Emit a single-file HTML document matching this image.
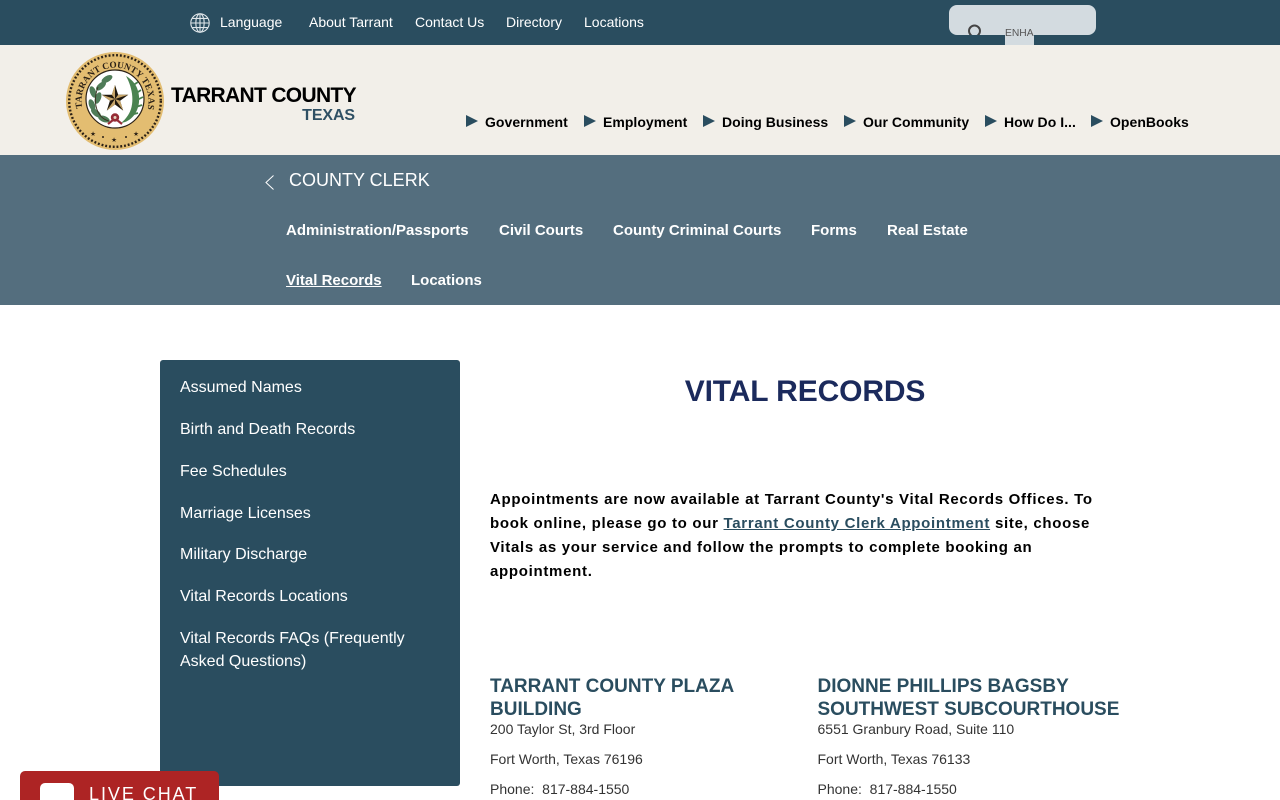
<!DOCTYPE html>
<html lang="en">
<head>
<meta charset="utf-8">
<title>Vital Records | Tarrant County</title>
<style>
html,body{margin:0;padding:0;background:#fff;width:1280px;height:800px;overflow:hidden}
body{position:relative;font-family:"Liberation Sans",Arial,sans-serif}
.a{position:absolute;white-space:nowrap;line-height:20px}
.bar{position:absolute;left:0;width:1280px}
.top{color:#fff;font-size:14px;top:12px}
.main{color:#000;font-size:14px;font-weight:bold;top:112px;letter-spacing:.03px}
.tri{position:absolute;top:115px;width:0;height:0;border-top:6px solid transparent;border-bottom:6px solid transparent;border-left:12px solid #2a4d5f}
.sub{color:#fff;font-size:15px;font-weight:bold}
.side{color:#fff;font-size:16px;left:180px;letter-spacing:0}
.body{color:#000;font-size:15px;font-weight:bold;left:490px;letter-spacing:.7px;line-height:24px}
.h3{color:#2a4d5f;font-size:19px;font-weight:bold;line-height:23px}
.p{color:#333;font-size:14px}
</style>
</head>
<body>
<div class="bar" style="top:0;height:45px;background:#2a4d5f"></div>
<div class="bar" style="top:45px;height:110px;background:#f2efe9"></div>
<div class="bar" style="top:155px;height:150px;background:#546e7e"></div>

<svg style="position:absolute;left:190px;top:13px" width="20" height="20" viewBox="0 0 20 20" fill="none" stroke="#dfe6ea" stroke-width="1.1"><circle cx="10" cy="10" r="9.2"/><ellipse cx="10" cy="10" rx="4.2" ry="9.2"/><path d="M10 .8V19.2M1 10H19M2.2 5.4H17.8M2.2 14.6H17.8"/></svg>
<div class="a top" style="left:220px">Language</div>
<div class="a top" style="left:309px">About Tarrant</div>
<div class="a top" style="left:415px">Contact Us</div>
<div class="a top" style="left:506px">Directory</div>
<div class="a top" style="left:584px">Locations</div>

<div style="position:absolute;left:949px;top:5px;width:147px;height:30px;background:#d3dbe0;border-radius:8px"></div>
<div style="position:absolute;left:1005px;top:35px;width:29px;height:10px;background:#d3dbe0"></div>
<svg style="position:absolute;left:966px;top:24px" width="20" height="11" viewBox="0 0 20 11" fill="none" stroke="#444" stroke-width="2"><circle cx="8.500" cy="7" r="5.500"/></svg>
<div class="a" style="left:1005px;top:24px;width:29px;overflow:hidden;font-size:10.300px;color:#555">ENHANCED</div>

<svg style="position:absolute;left:65px;top:51px" width="100" height="100" viewBox="0 0 100 100">
<defs><path id="arc" d="M17.200 57A33.500 33.500 0 1 1 82.800 57"/></defs>
<circle cx="50" cy="50" r="49" fill="#e3bd71"/>
<circle cx="50" cy="50" r="45.800" fill="none" stroke="#2b2116" stroke-width="2.400" stroke-dasharray="1.900 1.900"/>
<text font-family="Liberation Serif,serif" font-size="9.200" font-weight="bold" fill="#2b2116" textLength="120" lengthAdjust="spacing"><textPath href="#arc">TARRANT COUNTY TEXAS</textPath></text>
<circle cx="50" cy="48" r="29" fill="#fff" stroke="#2b2116" stroke-width="1.200"/>
<g fill="#4f7c58">
<ellipse cx="31" cy="62" rx="6" ry="3" transform="rotate(40 31 62)"/>
<ellipse cx="27" cy="54" rx="6" ry="3" transform="rotate(70 27 54)"/>
<ellipse cx="33" cy="47" rx="6" ry="3" transform="rotate(110 33 47)"/>
<ellipse cx="28" cy="41" rx="6" ry="3" transform="rotate(70 28 41)"/>
<ellipse cx="36" cy="35" rx="6" ry="3" transform="rotate(140 36 35)"/>
<ellipse cx="39" cy="68" rx="6" ry="3" transform="rotate(20 39 68)"/>
<ellipse cx="42" cy="28" rx="6" ry="3" transform="rotate(150 42 28)"/>
</g>
<path d="M44 70C32 67 27 52 33 36" fill="none" stroke="#3a2f20" stroke-width=".9"/>
<path d="M56 72C71 70 78 52 72 37 70 32 66 28 61 25 67 36 69 48 66 58 64 64 60 69 56 72Z" fill="#4a8350"/>
<path d="M65 64L73 62M68 57L77 54M70 50L78 46M70 43L76 39M67 35L73 31" stroke="#4a8350" stroke-width="1.800"/>
<polygon points="50,34 53.200,43.800 63.300,43.800 55.100,49.800 58.200,59.600 50,53.500 41.800,59.600 44.900,49.800 36.700,43.800 46.800,43.800" fill="#1f180f"/>
<path d="M50 48L50 34 46.800 43.800ZM50 48L63.300 43.800 53.200 43.800ZM50 48L58.200 59.600 55.100 49.800ZM50 48L41.800 59.600 50 53.500ZM50 48L36.700 43.800 44.900 49.800Z" fill="#c6a569"/>
<circle cx="50" cy="66.500" r="4.200" fill="#962c36"/>
<circle cx="50" cy="66.500" r="1.500" fill="#e5d3c0"/>
<path d="M43 73L48 69M57 73L52 69" stroke="#962c36" stroke-width="2.200"/>
<text x="28" y="85" text-anchor="middle" font-size="6.500" fill="#2b2116" font-family="DejaVu Sans,sans-serif">★</text>
<text x="49" y="91" text-anchor="middle" font-size="6.500" fill="#2b2116" font-family="DejaVu Sans,sans-serif">★</text>
<text x="71" y="85" text-anchor="middle" font-size="6.500" fill="#2b2116" font-family="DejaVu Sans,sans-serif">★</text>
<circle cx="38" cy="86" r="1" fill="#2b2116"/><circle cx="61" cy="86" r="1" fill="#2b2116"/>
</svg>

<div class="a" style="left:171px;top:84px;font-size:21px;line-height:24px;font-weight:bold;color:#000;letter-spacing:-.68px">TARRANT COUNTY</div>
<div class="a" style="right:925px;top:106px;font-size:16px;font-weight:bold;color:#2f5064;letter-spacing:-.1px">TEXAS</div>

<div class="tri" style="left:466px"></div><div class="a main" style="left:485px">Government</div>
<div class="tri" style="left:584px"></div><div class="a main" style="left:603px">Employment</div>
<div class="tri" style="left:703px"></div><div class="a main" style="left:722px">Doing Business</div>
<div class="tri" style="left:844px"></div><div class="a main" style="left:863px">Our Community</div>
<div class="tri" style="left:985px"></div><div class="a main" style="left:1004px">How Do I...</div>
<div class="tri" style="left:1091px"></div><div class="a main" style="left:1110px">OpenBooks</div>

<svg style="position:absolute;left:264px;top:174px" width="12" height="16" viewBox="0 0 12 16" fill="none" stroke="#fff" stroke-width="1"><path d="M9.500 1.500L2 8.500L9.500 15.500"/></svg>
<div class="a" style="left:289px;top:170px;font-size:18px;color:#fff">COUNTY CLERK</div>
<div class="a sub" style="left:286px;top:221px">Administration/Passports</div>
<div class="a sub" style="left:499px;top:221px">Civil Courts</div>
<div class="a sub" style="left:613px;top:221px">County Criminal Courts</div>
<div class="a sub" style="left:811px;top:221px">Forms</div>
<div class="a sub" style="left:887px;top:221px">Real Estate</div>
<div class="a sub" style="left:286px;top:271px;text-decoration:underline">Vital Records</div>
<div class="a sub" style="left:411px;top:271px">Locations</div>

<div style="position:absolute;left:160px;top:360px;width:300px;height:426px;background:#2a4d5f;border-radius:3px"></div>
<div class="a side" style="top:378px">Assumed Names</div>
<div class="a side" style="top:420px">Birth and Death Records</div>
<div class="a side" style="top:462px">Fee Schedules</div>
<div class="a side" style="top:504px">Marriage Licenses</div>
<div class="a side" style="top:545px">Military Discharge</div>
<div class="a side" style="top:587px">Vital Records Locations</div>
<div class="a side" style="top:629px">Vital Records FAQs (Frequently</div>
<div class="a side" style="top:652px">Asked Questions)</div>

<div class="a" style="left:490px;width:630px;top:374px;text-align:center;font-size:30px;line-height:36px;font-weight:bold;color:#1b2a5c;letter-spacing:-.13px">VITAL RECORDS</div>

<div class="a body" style="top:488px">Appointments are now available at Tarrant County's Vital Records Offices. To</div>
<div class="a body" style="top:512px">book online, please go to our <span style="color:#2a4d5f;text-decoration:underline">Tarrant County Clerk Appointment</span> site, choose</div>
<div class="a body" style="top:536px">Vitals as your service and follow the prompts to complete booking an</div>
<div class="a body" style="top:560px">appointment.</div>

<div class="a h3" style="left:490px;top:675px">TARRANT COUNTY PLAZA<br>BUILDING</div>
<div class="a p" style="left:490px;top:719px">200 Taylor St, 3rd Floor</div>
<div class="a p" style="left:490px;top:749px">Fort Worth, Texas 76196</div>
<div class="a p" style="left:490px;top:779px">Phone:&nbsp; 817-884-1550</div>

<div class="a h3" style="left:817.500px;top:675px">DIONNE PHILLIPS BAGSBY<br>SOUTHWEST SUBCOURTHOUSE</div>
<div class="a p" style="left:817.500px;top:719px">6551 Granbury Road, Suite 110</div>
<div class="a p" style="left:817.500px;top:749px">Fort Worth, Texas 76133</div>
<div class="a p" style="left:817.500px;top:779px">Phone:&nbsp; 817-884-1550</div>

<div style="position:absolute;left:20px;top:771px;width:199px;height:29px;background:#ad2424;border-radius:5px 5px 0 0"></div>
<div style="position:absolute;left:40px;top:783px;width:34px;height:17px;background:#fff;border-radius:5px 5px 0 0"></div>
<div class="a" style="left:89px;top:784px;font-size:18px;color:#fff;letter-spacing:1.950px">LIVE CHAT</div>
</body>
</html>
